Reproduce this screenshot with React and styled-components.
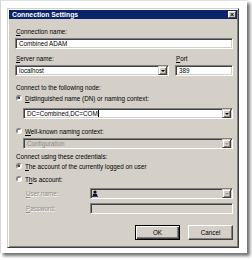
import React from "react";
import styled, { createGlobalStyle } from "styled-components";

const Global = createGlobalStyle`
  html, body { margin: 0; padding: 0; background: #fff; }
  body {
    width: 252px; height: 260px; overflow: hidden;
    font-family: "Liberation Sans", Arial, sans-serif;
  }
`;

const Frame = styled.div`
  box-sizing: border-box;
  width: 247px;
  height: 253px;
  background: #fff;
  border-left: 1px solid #d6d6d6;
  border-top: 1px solid #e2e2e2;
  box-shadow: 3px 3px 3px rgba(0, 0, 0, 0.55);
  padding: 7px 0 0 6px;
`;

const Dialog = styled.div`
  box-sizing: border-box;
  width: 232px;
  height: 240px;
  background: #d4d0c8;
  border: 1px solid;
  border-color: #d4d0c8 #404040 #404040 #d4d0c8;
  box-shadow: inset 1px 1px #fff, inset -1px -1px #808080;
  padding: 1px;
  display: flex;
  flex-direction: column;
`;

const TitleBar = styled.div`
  height: 9px;
  background: #0a246a;
  display: flex;
  align-items: center;
  justify-content: space-between;
  padding: 0 1px 0 3px;
  color: #fff;
  font-weight: bold;
  font-size: 6.8px;
  line-height: 9px;
`;

const CloseButton = styled.div`
  box-sizing: border-box;
  width: 8px;
  height: 7px;
  background: #d4d0c8;
  border: 1px solid;
  border-color: #fff #404040 #404040 #fff;
  color: #000;
  font-size: 7px;
  line-height: 5px;
  text-align: center;
  font-weight: bold;
`;

const Content = styled.div`
  display: flex;
  flex-direction: column;
  padding: 0 4px 0 6px;
  font-size: 6.3px;
  color: #000;
`;

const Label = styled.div`
  height: 8px;
  line-height: 8px;
  margin-top: ${(p) => p.$mt || 0}px;
  padding-left: ${(p) => p.$indent || 1}px;
  color: ${(p) => (p.$disabled ? "#8c8a84" : "#000")};
  text-shadow: ${(p) => (p.$disabled ? "0.5px 0.5px #fff" : "none")};
  white-space: nowrap;
`;

const Key = styled.span`
  text-decoration: underline;
  text-underline-offset: 1px;
  text-decoration-thickness: 0.5px;
`;

const Field = styled.div`
  box-sizing: border-box;
  height: 11px;
  margin-top: ${(p) => p.$mt || 0}px;
  margin-left: ${(p) => p.$indent || 0}px;
  flex: ${(p) => (p.$grow ? 1 : "none")};
  background: ${(p) => (p.$disabled ? "#d4d0c8" : "#fff")};
  border: 1px solid;
  border-color: #808080 #fff #fff #808080;
  box-shadow: inset 1px 1px #404040, inset -1px -1px #d4d0c8;
  display: flex;
  align-items: center;
  padding: 1px 1px 1px 3px;
  color: ${(p) => (p.$disabled ? "#8c8a84" : "#000")};
  line-height: 8px;
  white-space: nowrap;
`;

const FieldText = styled.span`
  flex: 1;
  overflow: hidden;
`;

const Caret = styled.span`
  display: inline-block;
  width: 0.6px;
  height: 7px;
  background: #000;
  vertical-align: middle;
  margin-left: 0.5px;
`;

const DropButton = styled.div`
  box-sizing: border-box;
  width: 9px;
  height: 9px;
  flex: none;
  background: #d4d0c8;
  border: 1px solid;
  border-color: #d4d0c8 #404040 #404040 #d4d0c8;
  box-shadow: inset 1px 1px #fff, inset -1px -1px #808080;
  display: flex;
  align-items: center;
  justify-content: center;
  &::after {
    content: "";
    border-left: 2px solid transparent;
    border-right: 2px solid transparent;
    border-top: 2px solid ${(p) => (p.$disabled ? "#9a9890" : "#000")};
  }
`;

const Row = styled.div`
  display: flex;
  align-items: ${(p) => p.$align || "stretch"};
  gap: ${(p) => p.$gap || 0}px;
  margin-top: ${(p) => p.$mt || 0}px;
  justify-content: ${(p) => p.$justify || "flex-start"};
`;

const Column = styled.div`
  display: flex;
  flex-direction: column;
  width: ${(p) => (p.$width ? `${p.$width}px` : "auto")};
  flex: ${(p) => (p.$width ? "none" : 1)};
`;

const RadioRow = styled.label`
  display: flex;
  align-items: center;
  gap: 3px;
  height: 8px;
  margin-top: ${(p) => p.$mt || 0}px;
  padding-left: 1px;
  white-space: nowrap;
`;

const Radio = styled.span`
  box-sizing: border-box;
  width: 6px;
  height: 6px;
  border-radius: 50%;
  background: #fff;
  border: 1px solid;
  border-color: #808080 #fff #fff #808080;
  box-shadow: inset 0.5px 0.5px #404040;
  display: flex;
  align-items: center;
  justify-content: center;
  &::after {
    content: "";
    width: 2px;
    height: 2px;
    border-radius: 50%;
    background: ${(p) => (p.$checked ? "#000" : "transparent")};
  }
`;

const FieldLabel = styled.div`
  width: 75px;
  flex: none;
  padding-left: 11px;
  box-sizing: border-box;
  line-height: 11px;
  color: #8c8a84;
  text-shadow: 0.5px 0.5px #fff;
`;

const Button = styled.div`
  box-sizing: border-box;
  width: 45px;
  height: 15px;
  background: #d4d0c8;
  border: 1px solid;
  border-color: ${(p) => (p.$default ? "#000" : "#fff #404040 #404040 #fff")};
  box-shadow: ${(p) =>
    p.$default
      ? "inset 1px 1px #fff, inset -1px -1px #404040, inset -2px -2px #808080"
      : "inset -1px -1px #808080"};
  display: flex;
  align-items: center;
  justify-content: center;
  font-size: 6.3px;
`;

const UserIcon = () => (
  <svg width="6" height="7" viewBox="0 0 6 7" style={{ flex: "none", marginLeft: -2, marginRight: 2 }}>
    <circle cx="3" cy="2" r="1.6" fill="#111" />
    <path d="M0.5 6 Q0.5 3.6 3 3.6 Q5.5 3.6 5.5 6 Z" fill="#111" />
    <rect x="0" y="6" width="6" height="1" fill="#1f3fb0" />
  </svg>
);

export default function App() {
  return (
    <>
      <Global />
      <Frame>
        <Dialog>
          <TitleBar>
            <span>Connection Settings</span>
            <CloseButton>×</CloseButton>
          </TitleBar>
          <Content>
            <Label $mt={9}>
              <Key>C</Key>onnection name:
            </Label>
            <Field $mt={2}>
              <FieldText>Combined ADAM</FieldText>
            </Field>

            <Row $mt={6} $gap={6}>
              <Column>
                <Label>
                  <Key>S</Key>erver name:
                </Label>
                <Field $mt={2}>
                  <FieldText>localhost</FieldText>
                  <DropButton />
                </Field>
              </Column>
              <Column $width={58}>
                <Label>
                  <Key>P</Key>ort
                </Label>
                <Field $mt={2}>
                  <FieldText>389</FieldText>
                </Field>
              </Column>
            </Row>

            <Label $mt={8}>Connect to the following node:</Label>
            <RadioRow $mt={2}>
              <Radio $checked />
              <span>
                <Key>D</Key>istinguished name (DN) or naming context:
              </span>
            </RadioRow>
            <Field $mt={6} $indent={8}>
              <FieldText>
                DC=Combined,DC=COM
                <Caret />
              </FieldText>
              <DropButton />
            </Field>

            <RadioRow $mt={8}>
              <Radio />
              <span>
                <Key>W</Key>ell-known naming context:
              </span>
            </RadioRow>
            <Field $mt={3} $indent={8} $disabled>
              <FieldText>Configuration</FieldText>
              <DropButton $disabled />
            </Field>

            <Label $mt={4}>Connect using these credentials:</Label>
            <RadioRow $mt={1}>
              <Radio $checked />
              <span>
                <Key>T</Key>he account of the currently logged on user
              </span>
            </RadioRow>
            <RadioRow $mt={5}>
              <Radio />
              <span>
                T<Key>h</Key>is account:
              </span>
            </RadioRow>

            <Row $mt={5}>
              <FieldLabel>
                <Key>U</Key>ser name:
              </FieldLabel>
              <Field $grow $disabled>
                <UserIcon />
                <FieldText />
                <DropButton $disabled />
              </Field>
            </Row>
            <Row $mt={4}>
              <FieldLabel>
                <Key>P</Key>assword:
              </FieldLabel>
              <Field $grow $disabled />
            </Row>

            <Row $mt={11} $gap={8} $justify="flex-end">
              <Button $default>OK</Button>
              <Button>Cancel</Button>
            </Row>
          </Content>
        </Dialog>
      </Frame>
    </>
  );
}
